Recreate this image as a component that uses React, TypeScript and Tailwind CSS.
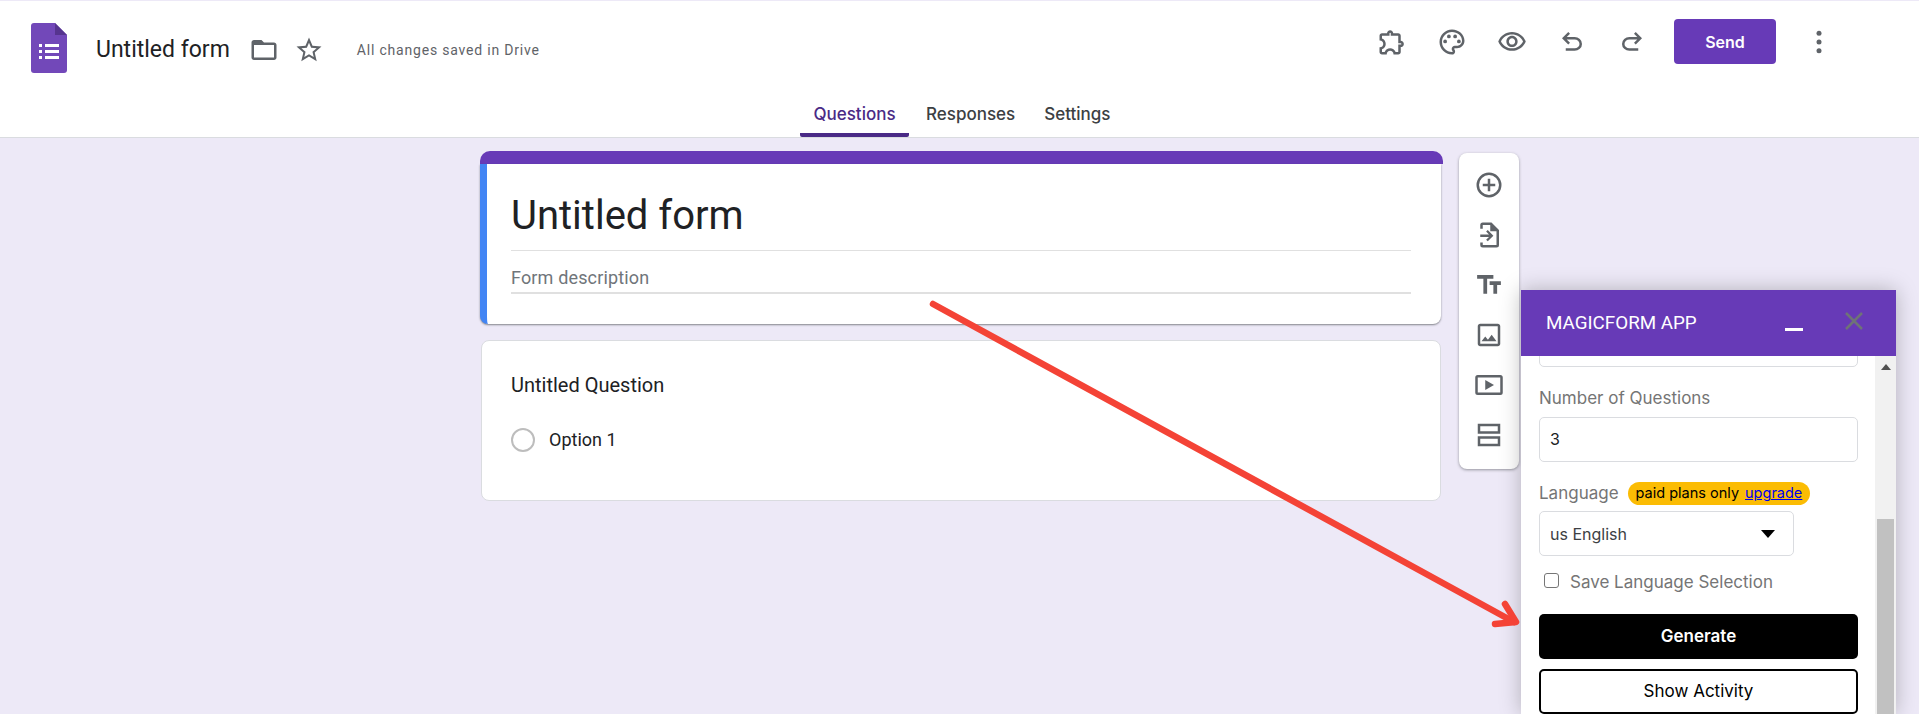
import type { ReactNode } from "react";

const ui = "font-['Roboto',sans-serif]";
const soft = "font-['Inter',sans-serif]";

function Icon({ children, className = "" }: { children: ReactNode; className?: string }) {
  return (
    <svg viewBox="0 0 24 24" className={`w-[30px] h-[30px] fill-[#5f6368] shrink-0 ${className}`}>
      {children}
    </svg>
  );
}

const undo =
  "M7 19v-2h7.1q1.575 0 2.738-1T18 13.5T16.838 11T14.1 10H7.8l2.6 2.6L9 14L4 9l5-5 1.4 1.4L7.8 8h6.3q2.425 0 4.163 1.575T20 13.5t-1.737 3.925T14.1 19z";

function Header() {
  return (
    <header className="h-[136px] shrink-0 bg-white relative">
      <div className="flex items-start">
        <div className="flex items-center pl-[31px] pt-[22px]">
          <svg viewBox="0 0 36 50" className="w-[36px] h-[50px]">
            <path d="M3 0h21l12 12v35a3 3 0 0 1-3 3H3a3 3 0 0 1-3-3V3a3 3 0 0 1 3-3z" fill="#7248b9" />
            <path d="M24 0l12 12H24z" fill="#56348f" />
            <path d="M8 21h3v3H8zM14 21h14v3H14zM8 27h3v3H8zM14 27h14v3H14zM8 33h3v3H8zM14 33h14v3H14z" fill="#fff" />
          </svg>
          <span className={`${ui} ml-[29px] mt-[5px] text-[23px] text-[#202124]`}>Untitled form</span>
          <Icon className="ml-[19px] mt-[4px]">
            <path d="M20 6h-8l-2-2H4c-1.1 0-1.99.9-1.99 2L2 18c0 1.1.9 2 2 2h16c1.1 0 2-.9 2-2V8c0-1.1-.9-2-2-2zm0 12H4V8h16v10z" />
          </Icon>
          <Icon className="ml-[15px] mt-[4px]">
            <path d="M22 9.24l-7.19-.62L12 2 9.19 8.63 2 9.24l5.46 4.73L5.82 21 12 17.27 18.18 21l-1.63-7.03L22 9.24zM12 15.4l-3.76 2.27 1-4.28-3.32-2.88 4.38-.38L12 6.1l1.71 4.04 4.38.38-3.32 2.88 1 4.28L12 15.4z" />
          </Icon>
          <span className={`${ui} ml-[33px] mt-[5px] text-[14px] tracking-[0.8px] text-[#5f6368]`}>All changes saved in Drive</span>
        </div>
        <div className="ml-auto flex items-center pt-[18px] pr-[85px] h-[45px] box-content">
          <Icon>
            <path d="M10.5 4.5c.28 0 .5.22.5.5v2h6v6h2c.28 0 .5.22.5.5s-.22.5-.5.5h-2v6h-2.12c-.68-1.75-2.39-3-4.38-3s-3.7 1.25-4.38 3H4v-2.12c1.75-.68 3-2.39 3-4.38 0-1.99-1.24-3.7-2.99-4.38L4 7h6V5c0-.28.22-.5.5-.5m0-2C9.12 2.5 8 3.62 8 5H4c-1.1 0-1.99.9-1.99 2v3.8h.29c1.49 0 2.7 1.21 2.7 2.7s-1.21 2.7-2.7 2.7H2V20c0 1.1.9 2 2 2h3.8v-.3c0-1.49 1.21-2.7 2.7-2.7s2.7 1.21 2.7 2.7v.3H17c1.1 0 2-.9 2-2v-4c1.38 0 2.5-1.12 2.5-2.5S20.38 11 19 11V7c0-1.1-.9-2-2-2h-4c0-1.38-1.12-2.5-2.5-2.5z" />
          </Icon>
          <Icon className="ml-[30px]">
            <path d="M12 22C6.49 22 2 17.51 2 12S6.49 2 12 2s10 4.04 10 9c0 3.31-2.69 6-6 6h-1.77c-.28 0-.5.22-.5.5 0 .12.05.23.13.33.41.47.64 1.06.64 1.67 0 1.38-1.12 2.5-2.5 2.5zm0-18c-4.41 0-8 3.59-8 8s3.59 8 8 8c.28 0 .5-.22.5-.5 0-.16-.08-.28-.14-.35-.41-.46-.63-1.05-.63-1.65 0-1.38 1.12-2.5 2.5-2.5H16c2.21 0 4-1.79 4-4 0-3.86-3.59-7-8-7z" />
            <circle cx="6.5" cy="11.5" r="1.5" />
            <circle cx="9.5" cy="7.5" r="1.5" />
            <circle cx="14.5" cy="7.5" r="1.5" />
            <circle cx="17.5" cy="11.5" r="1.5" />
          </Icon>
          <Icon className="ml-[30px]">
            <path d="M12 6c3.79 0 7.17 2.13 8.82 5.5C19.17 14.87 15.79 17 12 17s-7.17-2.13-8.82-5.5C4.83 8.13 8.21 6 12 6m0-2C7 4 2.73 7.11 1 11.5 2.73 15.89 7 19 12 19s9.27-3.11 11-7.5C21.27 7.11 17 4 12 4zm0 5c1.38 0 2.5 1.12 2.5 2.5S13.38 14 12 14s-2.5-1.12-2.5-2.5S10.62 9 12 9m0-2c-2.48 0-4.5 2.02-4.5 4.5S9.52 16 12 16s4.5-2.02 4.5-4.5S14.48 7 12 7z" />
          </Icon>
          <Icon className="ml-[30px]">
            <path d={undo} />
          </Icon>
          <Icon className="ml-[30px]">
            <g transform="matrix(-1 0 0 1 24 0)">
              <path d={undo} />
            </g>
          </Icon>
          <button className={`${soft} ml-[27px] w-[102px] h-[45px] rounded-[4px] bg-[#673ab7] text-white text-[16px] font-semibold`}>Send</button>
          <Icon className="ml-[28px]">
            <circle cx="12" cy="5" r="2" />
            <circle cx="12" cy="12" r="2" />
            <circle cx="12" cy="19" r="2" />
          </Icon>
        </div>
      </div>
      <nav className={`${soft} absolute bottom-0 left-[800px] flex text-[17px] h-[47px]`}>
        <div className="w-[109px] h-full flex items-center justify-center pt-[7px] text-[#4a2a86] font-medium border-b-4 border-[#4a2a86] rounded-b-[2px]">Questions</div>
        <div className="ml-[17px] flex items-center pt-[2px] text-[#3c4043] font-medium">Responses</div>
        <div className="ml-[29px] flex items-center pt-[2px] text-[#3c4043] font-medium">Settings</div>
      </nav>
    </header>
  );
}

function FormColumn() {
  return (
    <div className="w-[963px] shrink-0 flex flex-col">
      <div className="h-[13px] bg-[#673ab7] rounded-t-[10px]" />
      <div className="mr-[2px] h-[160px] bg-white border-l-[7px] border-[#4285f4] rounded-b-[8px] shadow-[0_1px_2px_rgba(60,64,67,0.6)] pl-[24px] pr-[30px]">
        <div className={`${ui} h-[87px] flex items-center pt-[17px] text-[40px] text-[#202124] border-b border-[#e0e0e0]`}>Untitled form</div>
        <div className={`${ui} h-[43px] flex items-center pt-[12px] text-[18px] tracking-[0.15px] text-[#70757a] border-b-2 border-[#e0e0e0]`}>Form description</div>
      </div>
      <div className="mt-[16px] ml-[1px] mr-[2px] h-[161px] bg-white rounded-[8px] border border-[#dadce0] pl-[29px]">
        <div className={`${ui} mt-[32px] text-[20px] leading-[24px] text-[#202124]`}>Untitled Question</div>
        <div className="mt-[29px] flex items-center">
          <div className="w-[24px] h-[24px] rounded-full border-2 border-[#bdbdbd]" />
          <span className={`${ui} ml-[14px] text-[18px] text-[#202124]`}>Option 1</span>
        </div>
      </div>
    </div>
  );
}

function Toolbar() {
  return (
    <aside className="ml-[16px] mt-[2px] w-[60px] h-[316px] bg-white rounded-[8px] shadow-[0_1px_3px_rgba(60,64,67,0.5)] flex flex-col items-center pt-[17px] gap-[20px]">
      <Icon>
        <circle cx="12" cy="12" r="9" fill="none" stroke="#5f6368" strokeWidth="2" />
        <path d="M11 7h2v4h4v2h-4v4h-2v-4H7v-2h4z" />
      </Icon>
      <Icon>
        <path d="M5 7V4a2 2 0 0 1 2-2h7l6 6v12a2 2 0 0 1-2 2H7a2 2 0 0 1-2-2v-2h2v2h11V9h-5V4H7v3z" />
        <path d="M5 11.5h7l-2.3-2.3L11 8l4.5 4.5L11 17l-1.3-1.2 2.3-2.3H5z" />
      </Icon>
      <Icon>
        <path d="M2.5 4v3h5v12h3V7h5V4h-13zm19 5h-9v3h3v7h3v-7h3V9z" />
      </Icon>
      <Icon>
        <path d="M19 5v14H5V5h14m0-2H5c-1.1 0-2 .9-2 2v14c0 1.1.9 2 2 2h14c1.1 0 2-.9 2-2V5c0-1.1-.9-2-2-2zm-4.86 8.86l-3 3.87L9 13.14 6 17h12l-3.86-5.14z" />
      </Icon>
      <Icon>
        <path d="M21 4H3a2 2 0 0 0-2 2v12a2 2 0 0 0 2 2h18a2 2 0 0 0 2-2V6a2 2 0 0 0-2-2zm0 14H3V6h18z" />
        <path d="M9 8v8l7-4z" />
      </Icon>
      <Icon>
        <path d="M3 3h18v8H3zm2 2v4h14V5zM3 13h18v8H3zm2 2v4h14v-4z" />
      </Icon>
    </aside>
  );
}

function MagicFormPanel() {
  const label = `${soft} text-[17px] text-[#757575]`;
  return (
    <div className="absolute left-[1521px] top-[290px] w-[375px] h-[424px] flex flex-col bg-white shadow-[0_0_20px_rgba(0,0,0,0.25)]">
      <div className="h-[66px] shrink-0 bg-[#673ab7] flex items-center relative">
        <span className={`${ui} ml-[25px] text-[18.8px] text-white`}>MAGICFORM APP</span>
        <div className="absolute left-[264px] top-[38px] w-[18px] h-[3px] bg-white" />
        <svg viewBox="0 0 18 18" className="absolute left-[324px] top-[22px] w-[18px] h-[18px] stroke-[#6f7377] stroke-[2.5px]">
          <path d="M1 1l16 16M17 1L1 17" />
        </svg>
      </div>
      <div className="flex-1 flex min-h-0 overflow-hidden">
        <div className="flex-1 min-w-0 pl-[18px] pr-[17px]">
          <div className="h-[45px] -mt-[34px] border border-[#dadce0] rounded-[5px]" />
          <div className={`${label} mt-[19px] leading-[24px]`}>Number of Questions</div>
          <div className={`${soft} mt-[7px] h-[45px] border border-[#dadce0] rounded-[5px] flex items-center pl-[10px] pb-[2px] text-[16px] text-[#202124]`}>3</div>
          <div className="mt-[19px] flex items-center h-[24px]">
            <span className={`${label} pt-[2px]`}>Language</span>
            <span className={`${soft} ml-[9px] h-[23px] px-[8px] rounded-full bg-[#fbbc04] flex items-center text-[14.5px] text-black`}>
              paid plans only
              <a className="ml-[6px] text-[#0000ee] underline">upgrade</a>
            </span>
          </div>
          <div className={`${soft} mt-[6px] w-[255px] h-[45px] border border-[#dadce0] rounded-[5px] flex items-center justify-between pl-[10px] pr-[18px] text-[16px] text-[#3c4043]`}>
            us English
            <svg viewBox="0 0 14 8" className="w-[14px] h-[8px] fill-black">
              <path d="M0 0h14L7 8z" />
            </svg>
          </div>
          <div className="mt-[14px] ml-[5px] flex items-center">
            <div className="w-[15px] h-[15px] rounded-[3px] border border-[#767676] -mt-[4px]" />
            <span className={`${label} ml-[11px]`}>Save Language Selection</span>
          </div>
          <button className={`${soft} mt-[18px] w-full h-[45px] rounded-[5px] bg-black text-white text-[17px] font-semibold pt-[2px]`}>Generate</button>
          <button className={`${soft} mt-[10px] w-full h-[45px] rounded-[5px] border-2 border-black bg-white text-black text-[17px] pt-[2px]`}>Show Activity</button>
        </div>
        <div className="w-[21px] shrink-0 bg-[#f1f1f1] flex flex-col items-center">
          <svg viewBox="0 0 10 6" className="mt-[8px] w-[10px] h-[6px] fill-[#505050]">
            <path d="M0 6h10L5 0z" />
          </svg>
          <div className="mt-[149px] flex-1 w-[17px] bg-[#c1c1c1]" />
        </div>
      </div>
    </div>
  );
}

export default function App() {
  return (
    <div className="relative w-full h-[714px] overflow-hidden bg-[#ede9f7] pt-px flex flex-col">
      <Header />
      <main className="border-t border-[#dadce0] pt-[13px] pl-[480px] flex items-start">
        <FormColumn />
        <Toolbar />
      </main>
      <MagicFormPanel />
      <svg className="absolute inset-0 w-full h-full pointer-events-none" viewBox="0 0 1919 714">
        <g fill="none" stroke="#f44336" strokeWidth="6.5" strokeLinecap="round" strokeLinejoin="round">
          <path d="M933 304L1514 622" />
          <path d="M1505 604L1516 622L1495 624" />
        </g>
      </svg>
    </div>
  );
}
